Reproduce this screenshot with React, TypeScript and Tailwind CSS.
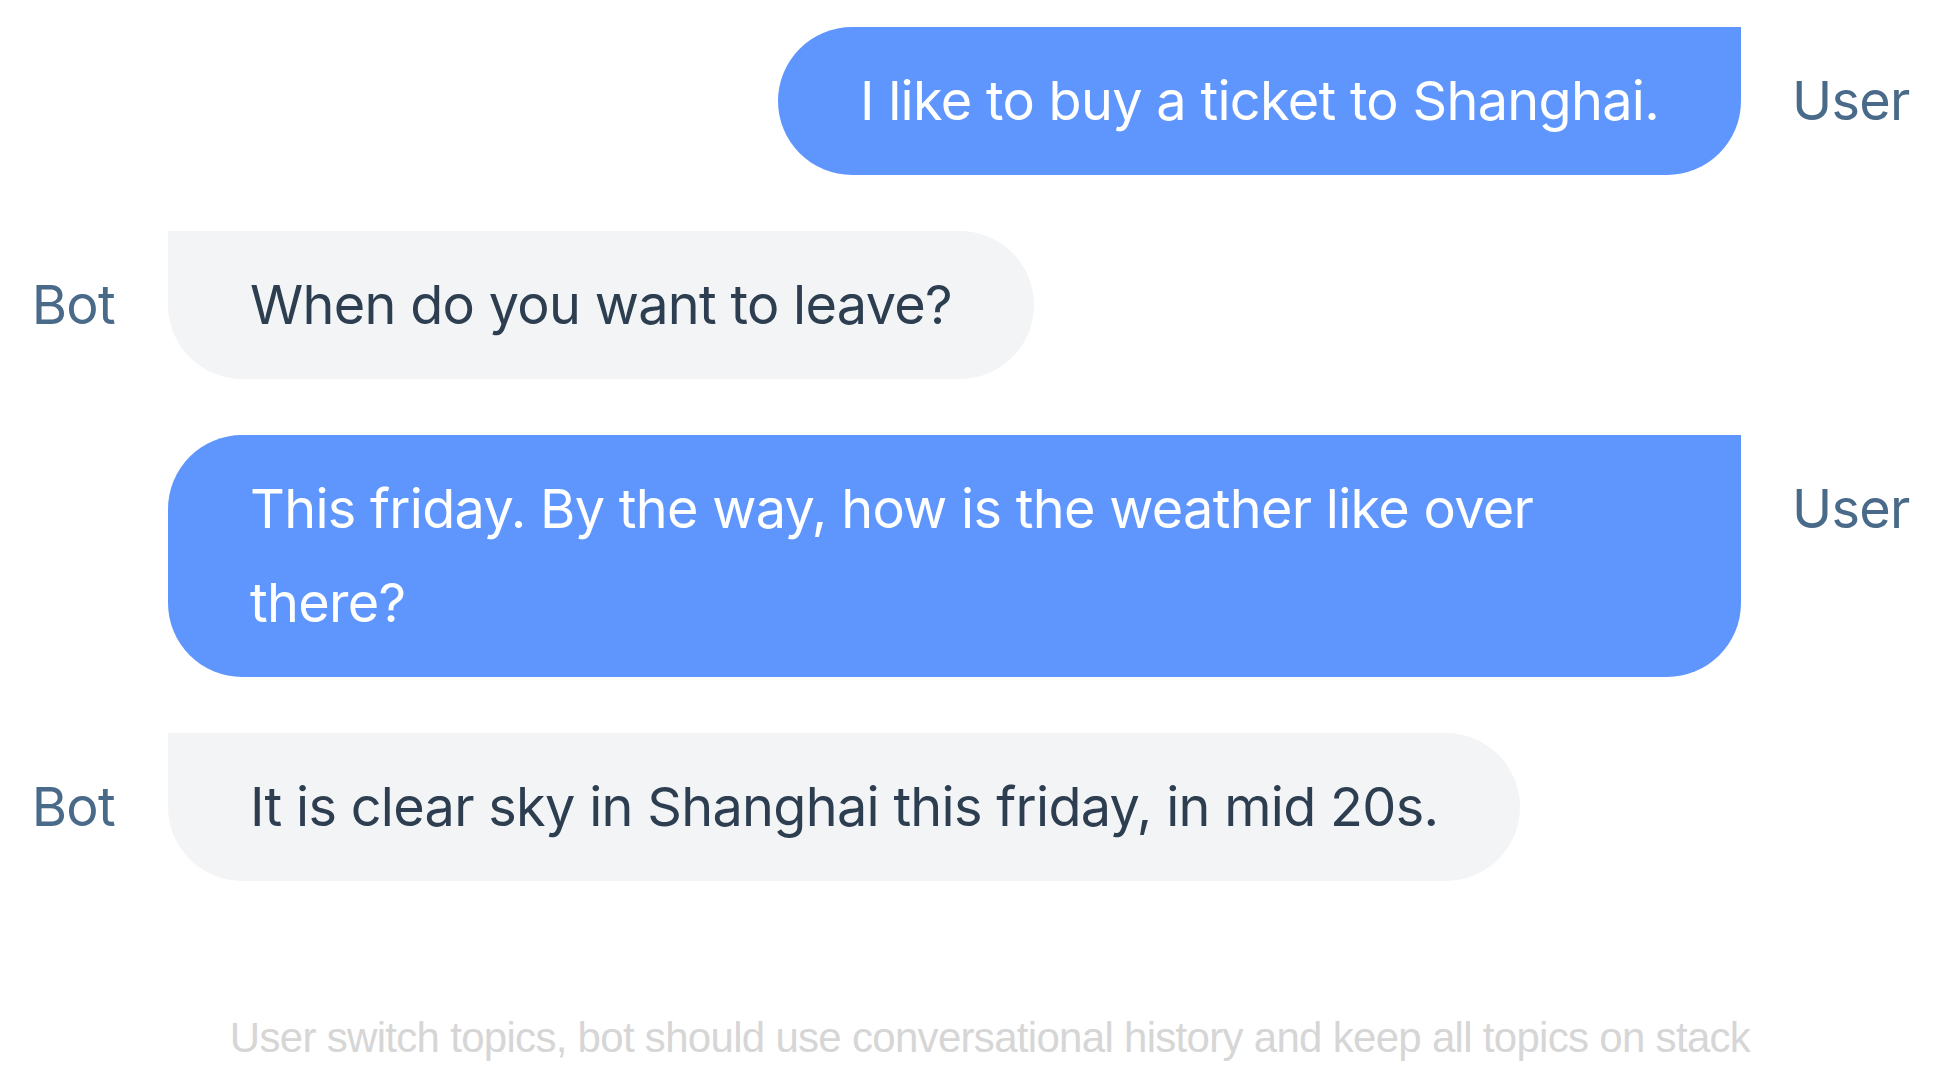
import React from 'react';

type Message = {
  from: 'user' | 'bot';
  text: string;
};

const messages: Message[] = [
  { from: 'user', text: 'I like to buy a ticket to Shanghai.' },
  { from: 'bot', text: 'When do you want to leave?' },
  { from: 'user', text: 'This friday. By the way, how is the weather like over there?' },
  { from: 'bot', text: 'It is clear sky in Shanghai this friday, in mid 20s.' },
];

const bubbleFont = { fontFamily: 'Inter, "Noto Sans", sans-serif' };

function Row({ message }: { message: Message }) {
  const isUser = message.from === 'user';

  return (
    <div className="grid grid-cols-[168px_1fr_195px] items-start tracking-[-0.7px]">
      <div className="pr-[53px] pt-[27px] text-right text-[54px] leading-[94px] text-[#4a6a8a]">
        {isUser ? null : 'Bot'}
      </div>
      <div className={isUser ? 'flex justify-end' : 'flex justify-start'}>
        <div
          className={
            isUser
              ? 'rounded-l-[74px] rounded-br-[74px] bg-[#5f96fe] px-[82px] py-[27px] text-[54px] leading-[94px] text-white'
              : 'rounded-r-[74px] rounded-bl-[74px] bg-[#f3f4f6] px-[82px] py-[27px] text-[54px] leading-[94px] text-[#2c3e50]'
          }
        >
          {message.text}
        </div>
      </div>
      <div className="pl-[51px] pt-[27px] text-[54px] leading-[94px] text-[#4a6a8a]">
        {isUser ? 'User' : null}
      </div>
    </div>
  );
}

export default function App() {
  return (
    <div className="min-h-screen w-full bg-white" style={bubbleFont}>
      <div className="flex flex-col gap-[56px] pt-[27px]">
        {messages.map((message, index) => (
          <Row key={index} message={message} />
        ))}
        <p
          className="mt-[76px] pl-[44px] text-center text-[42px] leading-[50px] tracking-[-0.7px] text-[#d6d6d6]"
          style={{ fontFamily: '"Liberation Sans", Arial, sans-serif' }}
        >
          User switch topics, bot should use conversational history and keep all topics on stack
        </p>
      </div>
    </div>
  );
}
